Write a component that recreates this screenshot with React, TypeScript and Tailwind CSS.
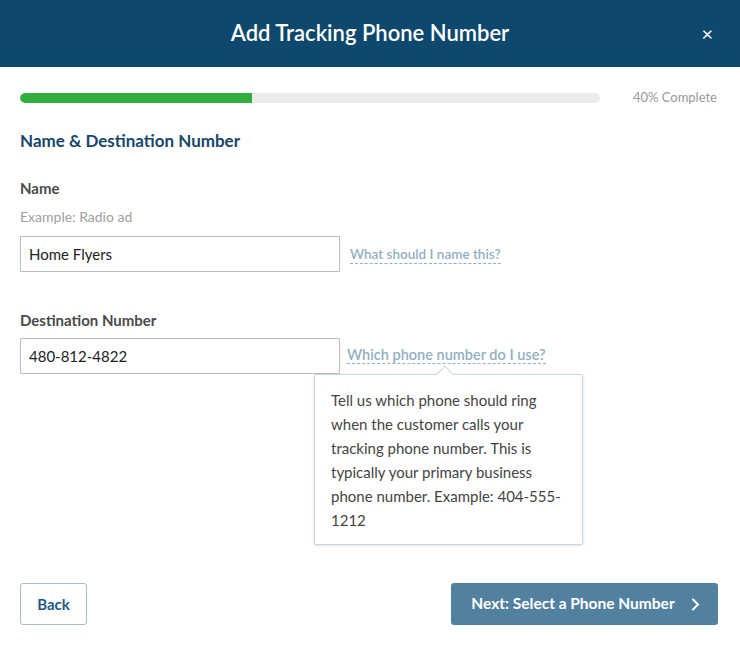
import React from "react";

export default function App() {
  return (
    <div
      className="w-[740px] h-[651px] bg-white relative overflow-hidden"
      style={{ fontFamily: '"Lato", "Open Sans", sans-serif' }}
    >
      <div className="h-[67px] bg-[#0e486c] flex items-center justify-center relative">
        <h1 className="text-white text-[22px] leading-[26px] font-semibold -mt-[2px]">Add Tracking Phone Number</h1>
        <span className="absolute right-[27px] top-[21px] text-white text-[20px] leading-[24px]">×</span>
      </div>

      <div className="pl-5 pr-[23px]">
        <div className="flex items-center mt-[26px] h-[10px]">
          <div className="w-[580px] h-[10px] rounded-full bg-[#ebebeb] overflow-hidden">
            <div className="h-full w-[232px] bg-[#32ae3f] rounded-l-full" />
          </div>
          <span className="ml-auto text-[13px] text-[#999999]">40% Complete</span>
        </div>

        <h2 className="mt-[27px] text-[17px] leading-[22px] font-bold text-[#16466a]">Name &amp; Destination Number</h2>

        <div className="mt-[26px] text-[15px] leading-[20px] font-bold text-[#4a4a4a]">Name</div>
        <div className="mt-[9px] text-[14px] leading-[20px] text-[#a0a0a0]">Example: Radio ad</div>
        <div className="mt-[9px] flex items-center">
          <div className="w-[320px] h-[36px] border border-[#bdbdbd] flex items-center px-2 text-[15px] text-[#222]">
            Home Flyers
          </div>
          <span className="ml-[10px] text-[13.5px] font-semibold text-[#93afc3] border-b border-dashed border-[#93afc3] leading-[17px] mt-[1px]">
            What should I name this?
          </span>
        </div>

        <div className="mt-[38px] text-[15px] leading-[20px] font-bold text-[#4a4a4a]">Destination Number</div>
        <div className="mt-[8px] flex items-start relative">
          <div className="w-[320px] h-[36px] border border-[#bdbdbd] flex items-center px-2 text-[15px] text-[#222]">
            480-812-4822
          </div>
          <span className="ml-[7px] mt-[8px] text-[14.5px] font-semibold text-[#93afc3] border-b border-dashed border-[#93afc3] leading-[17px]">
            Which phone number do I use?
          </span>

          <div className="absolute left-[294px] top-[36px] w-[269px] bg-white border border-[#c9d7e2] rounded-[2px] shadow-[0_1px_3px_rgba(0,0,0,0.12)] pl-4 pr-3 pt-[13px] pb-[12px] text-[15px] leading-[24px] text-[#444]">
            <div className="absolute -top-[7px] left-[124px] w-[12px] h-[12px] bg-white border-l border-t border-[#c9d7e2] rotate-45" />
            <span className="relative">
              Tell us which phone should ring when the customer calls your tracking phone number. This is typically your primary business phone number. Example: 404-555-1212
            </span>
          </div>
        </div>
      </div>

      <div className="absolute left-5 right-[22px] top-[583px] flex justify-between">
        <button className="h-[42px] w-[67px] border border-[#a7bccb] rounded-[3px] text-[15px] font-bold text-[#1e5a80] bg-white">
          Back
        </button>
        <button className="h-[42px] w-[267px] rounded-[3px] bg-[#52819f] text-white text-[15.5px] font-bold flex items-center justify-center gap-[16px] pl-[2px]">
          Next: Select a Phone Number
          <svg width="9" height="13" viewBox="0 0 9 13" fill="none">
            <path d="M2 1.5l5 5-5 5" stroke="white" strokeWidth="2" strokeLinecap="round" strokeLinejoin="round" />
          </svg>
        </button>
      </div>
    </div>
  );
}
